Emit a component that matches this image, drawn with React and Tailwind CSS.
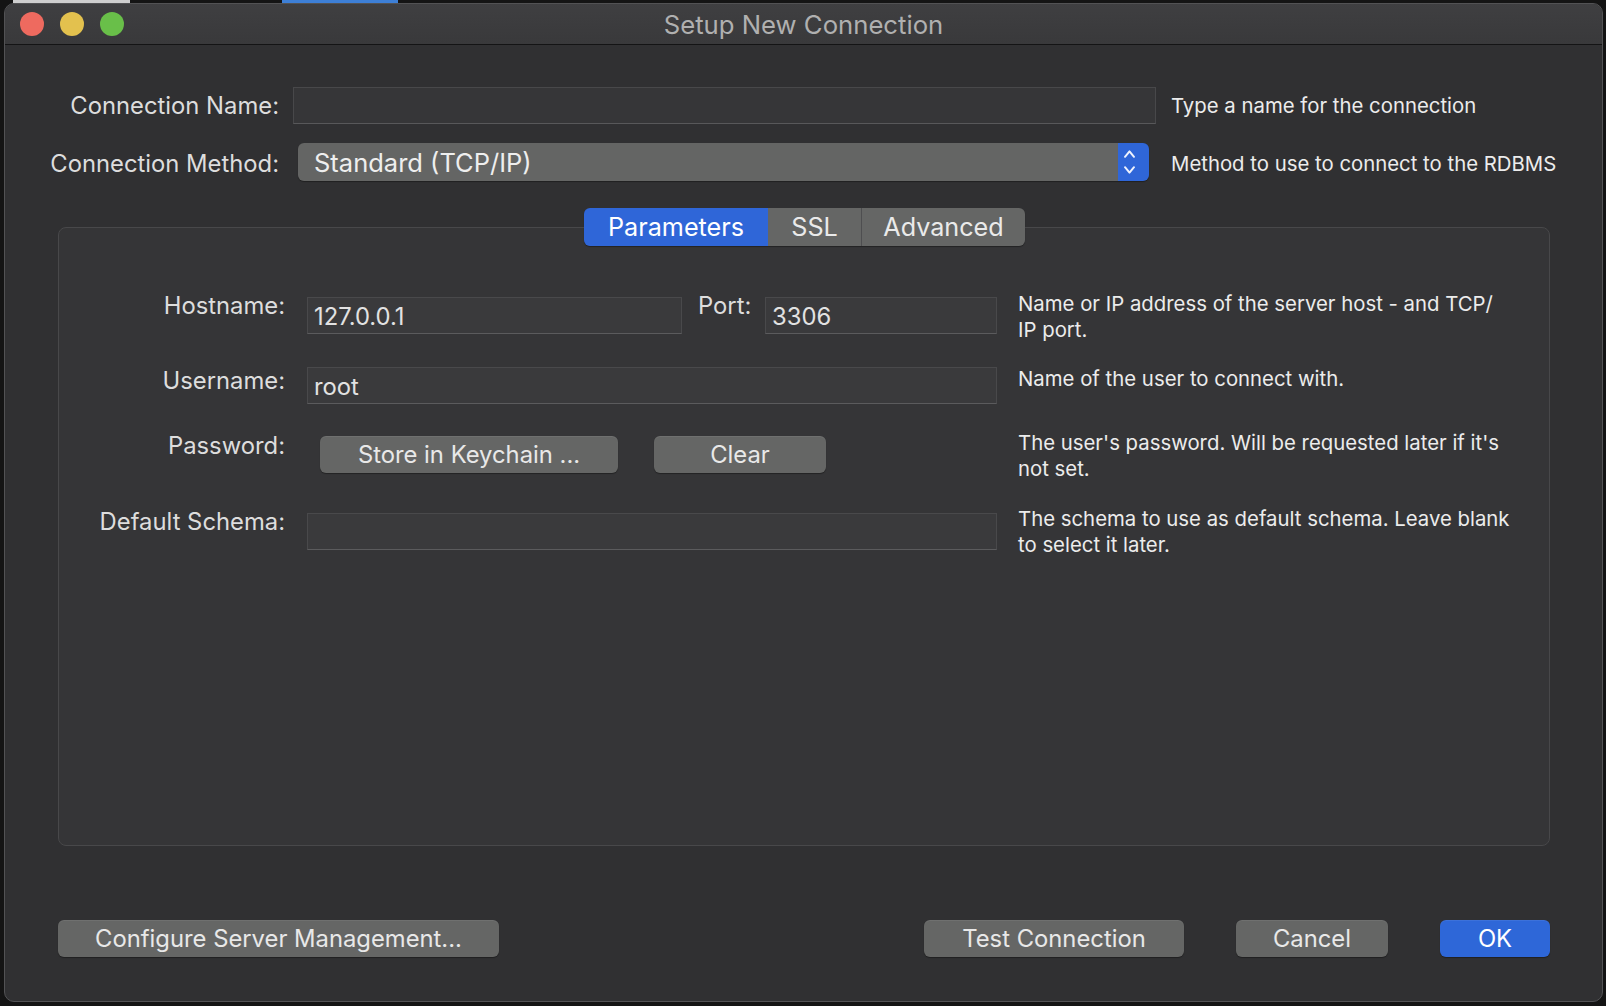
import React from "react";

function Field({ w, children }) {
  return (
    <div
      className={`h-[37px] bg-[#3a3a3c] border border-[#49494b] border-b-[#5b5b5d] flex items-start pt-[4px] pl-[6px] text-[23.8px] leading-[30px] text-[#e2e2e2] ${w}`}
    >
      {children}
    </div>
  );
}

function Btn({ className, children, blue }) {
  return (
    <div
      className={`h-[37px] rounded-[6px] flex items-center justify-center text-[23.8px] leading-[30px] shadow-[0_1px_1px_rgba(0,0,0,0.35),inset_0_1px_0_rgba(255,255,255,0.07)] ${
        blue ? "bg-[#2e67d8] text-white" : "bg-[#656665] text-[#e8e8e8]"
      } ${className}`}
    >
      {children}
    </div>
  );
}

function Chevrons() {
  return (
    <svg width="13" height="38" viewBox="0 0 13 38" fill="none">
      <path d="M2 13.8 L6.5 8.4 L11 13.8" stroke="#eef2fd" strokeWidth="2" strokeLinecap="round" strokeLinejoin="round" />
      <path d="M2 24.2 L6.5 29.6 L11 24.2" stroke="#eef2fd" strokeWidth="2" strokeLinecap="round" strokeLinejoin="round" />
    </svg>
  );
}

export default function App() {
  return (
    <div className="w-[1606px] h-[1006px] bg-[#141414] font-['Inter','Liberation_Sans',sans-serif] antialiased overflow-hidden">
      <div className="flex h-[3px]">
        <div className="ml-[13px] w-[117px] bg-[#cfcfcf]" />
        <div className="ml-[152px] w-[116px] bg-[#3d7fd6]" />
      </div>
      <div className="ml-[4px] w-[1599px] h-[999px] rounded-[10px] border border-[#525254] bg-[#303032] flex flex-col overflow-hidden">
        {/* Title bar */}
        <div className="h-[41px] shrink-0 border-b border-[#141415] bg-gradient-to-b from-[#3f3f41] to-[#39393b] grid grid-cols-[1fr_auto_1fr] items-center">
          <div className="flex items-center gap-[16px] pl-[15px]">
            <span className="w-[24px] h-[24px] rounded-full bg-[#ee6a5f]" />
            <span className="w-[24px] h-[24px] rounded-full bg-[#e3c14e]" />
            <span className="w-[24px] h-[24px] rounded-full bg-[#69bf49]" />
          </div>
          <div className="pt-[2px] text-[25.7px] leading-[30px] text-[#b0b0b0]">Setup New Connection</div>
          <div />
        </div>

        {/* Connection Name */}
        <div className="mt-[42px] flex items-center h-[37px]">
          <div className="w-[274px] text-right text-[23.8px] leading-[30px] text-[#dddddd]">Connection Name:</div>
          <div className="ml-[14px] w-[863px] h-[37px] bg-[#363638] border border-[#48484a] border-b-[#58585a]" />
          <div className="ml-[15px] text-[20.35px] leading-[26px] text-[#ececec]">Type a name for the connection</div>
        </div>

        {/* Connection Method */}
        <div className="mt-[19px] flex items-center h-[38px]">
          <div className="w-[274px] pt-[4px] text-right text-[23.8px] leading-[30px] text-[#dddddd]">Connection Method:</div>
          <div className="ml-[19px] w-[851px] h-[38px] rounded-[6px] flex overflow-hidden shadow-[0_1px_1px_rgba(0,0,0,0.35)]">
            <div className="flex-1 bg-[#646564] flex items-center pl-[16px] pt-[1px] text-[25.5px] leading-[30px] text-[#eeeeee]">
              Standard (TCP/IP)
            </div>
            <div className="w-[31px] bg-[#2f66d8] flex items-center pl-[5px]">
              <Chevrons />
            </div>
          </div>
          <div className="ml-[22px] pt-[4px] text-[20.35px] leading-[26px] text-[#ececec]">Method to use to connect to the RDBMS</div>
        </div>

        {/* Group box */}
        <div className="mt-[46px] ml-[53px] w-[1492px] h-[619px] shrink-0 rounded-[8px] border border-[#48484a] bg-[#353537] flex flex-col">
          <div className="-mt-[20px] ml-[525px] flex h-[38px] w-[441px] rounded-[6px] overflow-hidden shadow-[0_1px_1px_rgba(0,0,0,0.35)] text-[25.2px] leading-[30px]">
            <div className="w-[184px] bg-[#2f66d8] text-white flex items-center justify-center">Parameters</div>
            <div className="w-[93px] bg-[#656665] text-[#eaeaea] flex items-center justify-center">SSL</div>
            <div className="w-[1px] bg-[#4e4e50]" />
            <div className="w-[163px] bg-[#656665] text-[#eaeaea] flex items-center justify-center">Advanced</div>
          </div>

          <div className="mt-[51px] flex flex-col text-[#dddddd]">
            {/* Hostname */}
            <div className="h-[70px] flex items-start">
              <div className="w-[226px] -mt-[6px] text-right text-[23.8px] leading-[30px]">Hostname:</div>
              <div className="ml-[22px] w-[690px] flex items-start">
                <Field w="w-[375px]">127.0.0.1</Field>
                <div className="w-[83px] pl-[16px] -mt-[6px] text-[23.8px] leading-[30px]">Port:</div>
                <Field w="w-[232px]">3306</Field>
              </div>
              <div className="ml-[21px] -mt-[6px] text-[20.35px] leading-[26px] text-[#ececec] whitespace-nowrap">
                Name or IP address of the server host - and TCP/
                <br />
                IP port.
              </div>
            </div>

            {/* Username */}
            <div className="h-[69px] flex items-start">
              <div className="w-[226px] -mt-[1px] text-right text-[23.8px] leading-[30px]">Username:</div>
              <div className="ml-[22px] w-[690px] flex items-start">
                <Field w="w-[690px]">root</Field>
              </div>
              <div className="ml-[21px] -mt-[1px] text-[20.35px] leading-[26px] text-[#ececec] whitespace-nowrap">
                Name of the user to connect with.
              </div>
            </div>

            {/* Password */}
            <div className="h-[77px] flex items-start">
              <div className="w-[226px] -mt-[5px] text-right text-[23.8px] leading-[30px]">Password:</div>
              <div className="ml-[22px] w-[690px] flex items-start pl-[13px]">
                <Btn className="w-[298px]">Store in Keychain ...</Btn>
                <Btn className="ml-[36px] w-[172px]">Clear</Btn>
              </div>
              <div className="ml-[21px] -mt-[6px] text-[20.35px] leading-[26px] text-[#ececec] whitespace-nowrap">
                The user's password. Will be requested later if it's
                <br />
                not set.
              </div>
            </div>

            {/* Default Schema */}
            <div className="h-[69px] flex items-start">
              <div className="w-[226px] -mt-[6px] text-right text-[23.8px] leading-[30px]">Default Schema:</div>
              <div className="ml-[22px] w-[690px] flex items-start">
                <Field w="w-[690px]"></Field>
              </div>
              <div className="ml-[21px] -mt-[7px] text-[20.35px] leading-[26px] text-[#ececec] whitespace-nowrap">
                The schema to use as default schema. Leave blank
                <br />
                to select it later.
              </div>
            </div>
          </div>
        </div>

        {/* Bottom buttons */}
        <div className="mt-[74px] flex items-center h-[37px] pl-[53px] pr-[52px]">
          <Btn className="w-[441px]">Configure Server Management...</Btn>
          <div className="flex-1" />
          <Btn className="w-[260px]">Test Connection</Btn>
          <Btn className="ml-[52px] w-[152px]">Cancel</Btn>
          <Btn className="ml-[52px] w-[110px]" blue>
            OK
          </Btn>
        </div>
      </div>
    </div>
  );
}
